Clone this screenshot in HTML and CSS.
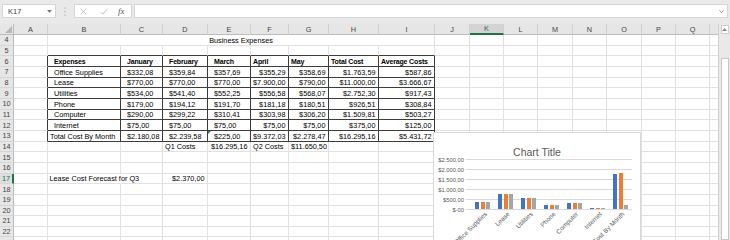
FILE: index.html
```html
<!DOCTYPE html>
<html>
<head>
<meta charset="utf-8">
<title>Business Expenses</title>
<link rel="stylesheet" href="styles.css">
</head>
<body>
<div class="app">
  <div class="formula-bar">
    <div class="namebox"><span class="nb-text">K17</span><svg class="nb-caret" width="5" height="3" viewBox="0 0 5 3"><path d="M0 0h5L2.5 3z" fill="#7a7a7a"/></svg></div>
    <div class="grip"><svg width="2" height="9" viewBox="0 0 2 9"><circle cx="1" cy="1" r=".7" fill="#b0b0b0"/><circle cx="1" cy="4.5" r=".7" fill="#b0b0b0"/><circle cx="1" cy="8" r=".7" fill="#b0b0b0"/></svg></div>
    <div class="fxbox">
      <svg class="ic-x" width="7" height="7" viewBox="0 0 7 7"><path d="M0.6 0.6L6.4 6.4M6.4 0.6L0.6 6.4" stroke="#bcbcbc" stroke-width="0.9" fill="none"/></svg>
      <svg class="ic-check" width="8" height="7" viewBox="0 0 8 7"><path d="M0.6 3.9L2.9 6.2L7.4 0.7" stroke="#bcbcbc" stroke-width="0.9" fill="none"/></svg>
      <span class="fx">fx</span>
    </div>
    <div class="finput"><svg width="5" height="3" viewBox="0 0 5 3"><path d="M0.4 0.4L2.5 2.6L4.6 0.4" stroke="#777" stroke-width="0.8" fill="none"/></svg></div>
  </div>
  <div class="workspace">
    <div class="sheet">
      <table class="grid">
        <colgroup>
          <col class="w-rh"><col class="w-a"><col class="w-b"><col class="w-c"><col class="w-d"><col class="w-e"><col class="w-f"><col class="w-g"><col class="w-h"><col class="w-i"><col class="w-j"><col class="w-k"><col class="w-l"><col class="w-m"><col class="w-n"><col class="w-o"><col class="w-p"><col class="w-q"><col class="w-r">
        </colgroup>
        <tr class="hdr">
          <th class="corner"><svg width="7" height="7" viewBox="0 0 7 7"><path d="M7 0V7H0z" fill="#b8b8b8"/></svg></th>
          <th class="ch">A</th><th class="ch">B</th><th class="ch">C</th><th class="ch">D</th><th class="ch">E</th><th class="ch">F</th><th class="ch">G</th><th class="ch">H</th><th class="ch">I</th><th class="ch">J</th><th class="ch sel">K</th><th class="ch">L</th><th class="ch">M</th><th class="ch">N</th><th class="ch">O</th><th class="ch">P</th><th class="ch">Q</th><th class="ch"></th>
        </tr>
        <tr>
          <th class="rh">4</th><td></td><td colspan="8" class="title">Business Expenses</td><td></td><td></td><td></td><td></td><td></td><td></td><td></td><td></td><td></td>
        </tr>
        <tr>
          <th class="rh">5</th><td></td><td class="db"></td><td class="db"></td><td class="db"></td><td class="db"></td><td class="db"></td><td class="db"></td><td class="db"></td><td class="db"></td><td></td><td></td><td></td><td></td><td></td><td></td><td></td><td></td><td></td>
        </tr>
        <tr>
          <th class="rh">6</th><td class="dr"></td><td class="t b in">Expenses</td><td class="t b in">January</td><td class="t b in">February</td><td class="t b in">March</td><td class="t b">April</td><td class="t b">May</td><td class="t b">Total Cost</td><td class="t b">Average Costs</td><td></td><td></td><td></td><td></td><td></td><td></td><td></td><td></td><td></td>
        </tr>
        <tr>
          <th class="rh">7</th><td class="dr"></td><td class="t in">Office Supplies</td><td class="t in">$332,08</td><td class="t in">$359,84</td><td class="t in">$357,69</td><td class="t num">$355,29</td><td class="t num">$358,69</td><td class="t num">$1.763,59</td><td class="t num">$587,86</td><td></td><td></td><td></td><td></td><td></td><td></td><td></td><td></td><td></td>
        </tr>
        <tr>
          <th class="rh">8</th><td class="dr"></td><td class="t in">Lease</td><td class="t in">$770,00</td><td class="t in">$770,00</td><td class="t in">$770,00</td><td class="t num">$7.900,00</td><td class="t num">$790,00</td><td class="t num">$11.000,00</td><td class="t num">$3.666,67</td><td></td><td></td><td></td><td></td><td></td><td></td><td></td><td></td><td></td>
        </tr>
        <tr>
          <th class="rh">9</th><td class="dr"></td><td class="t in">Utilities</td><td class="t in">$534,00</td><td class="t in">$541,40</td><td class="t in">$552,25</td><td class="t num">$556,58</td><td class="t num">$568,07</td><td class="t num">$2.752,30</td><td class="t num">$917,43</td><td></td><td></td><td></td><td></td><td></td><td></td><td></td><td></td><td></td>
        </tr>
        <tr>
          <th class="rh">10</th><td class="dr"></td><td class="t in">Phone</td><td class="t in">$179,00</td><td class="t in">$194,12</td><td class="t in">$191,70</td><td class="t num">$181,18</td><td class="t num">$180,51</td><td class="t num">$926,51</td><td class="t num">$308,84</td><td></td><td></td><td></td><td></td><td></td><td></td><td></td><td></td><td></td>
        </tr>
        <tr>
          <th class="rh">11</th><td class="dr"></td><td class="t in">Computer</td><td class="t in">$290,00</td><td class="t in">$299,22</td><td class="t in">$310,41</td><td class="t num">$303,98</td><td class="t num">$306,20</td><td class="t num">$1.509,81</td><td class="t num">$503,27</td><td></td><td></td><td></td><td></td><td></td><td></td><td></td><td></td><td></td>
        </tr>
        <tr>
          <th class="rh">12</th><td class="dr"></td><td class="t in">Internet</td><td class="t in">$75,00</td><td class="t in">$75,00</td><td class="t in">$75,00</td><td class="t num">$75,00</td><td class="t num">$75,00</td><td class="t num">$375,00</td><td class="t num">$125,00</td><td></td><td></td><td></td><td></td><td></td><td></td><td></td><td></td><td></td>
        </tr>
        <tr>
          <th class="rh">13</th><td class="dr"></td><td class="t">Total Cost By Month</td><td class="t in">$2.180,08</td><td class="t in">$2.239,58</td><td class="t in err">$225,00</td><td class="t num">$9.372,03</td><td class="t num">$2.278,47</td><td class="t num">$16.295,16</td><td class="t num">$5.431,72</td><td></td><td></td><td></td><td></td><td></td><td></td><td></td><td></td><td></td>
        </tr>
        <tr>
          <th class="rh">14</th><td></td><td></td><td></td><td>Q1 Costs</td><td class="num">$16.295,16</td><td>Q2 Costs</td><td class="num">$11.650,50</td><td></td><td></td><td></td><td></td><td></td><td></td><td></td><td></td><td></td><td></td><td></td>
        </tr>
        <tr>
          <th class="rh">15</th><td></td><td></td><td></td><td></td><td></td><td></td><td></td><td></td><td></td><td></td><td></td><td></td><td></td><td></td><td></td><td></td><td></td><td></td>
        </tr>
        <tr>
          <th class="rh">16</th><td></td><td></td><td></td><td></td><td></td><td></td><td></td><td></td><td></td><td></td><td></td><td></td><td></td><td></td><td></td><td></td><td></td><td></td>
        </tr>
        <tr>
          <th class="rh sel">17</th><td></td><td class="ovf">Lease Cost Forecast for Q3</td><td></td><td class="num">$2.370,00</td><td></td><td></td><td></td><td></td><td></td><td></td><td></td><td></td><td></td><td></td><td></td><td></td><td></td><td></td>
        </tr>
        <tr>
          <th class="rh">18</th><td></td><td></td><td></td><td></td><td></td><td></td><td></td><td></td><td></td><td></td><td></td><td></td><td></td><td></td><td></td><td></td><td></td><td></td>
        </tr>
        <tr>
          <th class="rh">19</th><td></td><td></td><td></td><td></td><td></td><td></td><td></td><td></td><td></td><td></td><td></td><td></td><td></td><td></td><td></td><td></td><td></td><td></td>
        </tr>
        <tr>
          <th class="rh">20</th><td></td><td></td><td></td><td></td><td></td><td></td><td></td><td></td><td></td><td></td><td></td><td></td><td></td><td></td><td></td><td></td><td></td><td></td>
        </tr>
        <tr>
          <th class="rh">21</th><td></td><td></td><td></td><td></td><td></td><td></td><td></td><td></td><td></td><td></td><td></td><td></td><td></td><td></td><td></td><td></td><td></td><td></td>
        </tr>
        <tr>
          <th class="rh">22</th><td></td><td></td><td></td><td></td><td></td><td></td><td></td><td></td><td></td><td></td><td></td><td></td><td></td><td></td><td></td><td></td><td></td><td></td>
        </tr>
        <tr>
          <th class="rh"></th><td></td><td></td><td></td><td></td><td></td><td></td><td></td><td></td><td></td><td></td><td></td><td></td><td></td><td></td><td></td><td></td><td></td><td></td>
        </tr>
      </table>

      <div class="chart">
        <div class="chart-title">Chart Title</div>
        <div class="chart-body">
          <div class="yaxis">
            <span>$2.500,00</span><span>$2.000,00</span><span>$1.500,00</span><span>$1.000,00</span><span>$500,00</span><span>$-00</span>
          </div>
          <div class="plot">
            <div class="bars">
              <div class="cat"><div class="bar s1" style="height:6.6px"></div><div class="bar s2" style="height:7.2px"></div><div class="bar s3" style="height:7.2px"></div><span class="cat-label">Office Supplies</span></div>
              <div class="cat"><div class="bar s1" style="height:15.4px"></div><div class="bar s2" style="height:15.4px"></div><div class="bar s3" style="height:15.4px"></div><span class="cat-label">Lease</span></div>
              <div class="cat"><div class="bar s1" style="height:10.7px"></div><div class="bar s2" style="height:10.8px"></div><div class="bar s3" style="height:11px"></div><span class="cat-label">Utilities</span></div>
              <div class="cat"><div class="bar s1" style="height:3.6px"></div><div class="bar s2" style="height:3.9px"></div><div class="bar s3" style="height:3.8px"></div><span class="cat-label">Phone</span></div>
              <div class="cat"><div class="bar s1" style="height:5.8px"></div><div class="bar s2" style="height:6px"></div><div class="bar s3" style="height:6.2px"></div><span class="cat-label">Computer</span></div>
              <div class="cat"><div class="bar s1" style="height:1.5px"></div><div class="bar s2" style="height:1.5px"></div><div class="bar s3" style="height:1.5px"></div><span class="cat-label">Internet</span></div>
              <div class="cat"><div class="bar s1" style="height:34.7px"></div><div class="bar s2" style="height:36.3px"></div><div class="bar s3" style="height:4.5px"></div><span class="cat-label">Total Cost By Month</span></div>
            </div>
          </div>
        </div>
      </div>
    </div>
    <div class="vscroll">
      <div class="vs-up"><svg width="5" height="3" viewBox="0 0 5 3"><path d="M0 3h5L2.5 0z" fill="#8a8a8a"/></svg></div>
      <div class="vs-track"></div>
      <div class="vs-thumb"></div>
    </div>
  </div>
</div>
</body>
</html>
```

FILE: styles.css
```css
* { box-sizing: border-box; }
html, body { margin: 0; padding: 0; }
body {
  width: 730px;
  height: 240px;
  overflow: hidden;
  background: #fff;
  font-family: "Liberation Sans", Arial, sans-serif;
  color: #000;
}
.app { display: flex; flex-direction: column; height: 240px; }

/* formula bar */
.formula-bar {
  height: 24px;
  flex: none;
  display: flex;
  align-items: flex-start;
  padding: 4px 2px 0 2px;
  background: #e9e9e9;
}
.namebox {
  width: 54px;
  height: 14px;
  background: #fff;
  border: 1px solid #d6d6d6;
  display: flex;
  align-items: center;
  justify-content: space-between;
  padding: 0 3px 0 5px;
  font-size: 7.5px;
  color: #444;
}
.grip { width: 18px; height: 14px; display: flex; align-items: center; justify-content: center; }
.fxbox {
  width: 58px;
  height: 14px;
  background: #fff;
  border: 1px solid #d6d6d6;
  display: flex;
  align-items: center;
  padding-left: 5px;
}
.ic-check { margin-left: 13px; }
.fx {
  margin-left: 10px;
  font-family: "Liberation Serif", "Times New Roman", serif;
  font-style: italic;
  font-size: 9px;
  color: #555;
}
.finput {
  flex: 1;
  margin-left: 2px;
  height: 14px;
  background: #fff;
  border: 1px solid #d6d6d6;
  display: flex;
  align-items: center;
  justify-content: flex-end;
  padding-right: 3px;
}

/* workspace */
.workspace { flex: 1; display: flex; overflow: hidden; }
.sheet { position: relative; width: 718px; flex: none; overflow: hidden; }

.grid {
  border-collapse: separate;
  border-spacing: 0;
  table-layout: fixed;
  width: 744px;
}
.w-rh { width: 14px; }
.w-a { width: 34px; }
.w-b { width: 73px; }
.w-c { width: 42px; }
.w-d { width: 45px; }
.w-e { width: 43px; }
.w-f { width: 38px; }
.w-g { width: 40px; }
.w-h { width: 50px; }
.w-i { width: 56px; }
.w-j { width: 35px; }
.w-k { width: 34px; }
.w-l { width: 34px; }
.w-m { width: 35px; }
.w-n { width: 34px; }
.w-o { width: 35px; }
.w-p { width: 34px; }
.w-q { width: 34px; }
.w-r { width: 34px; }

.grid tr { height: 10.667px; }
.grid td, .grid th {
  padding: 0;
  font-size: 7.3px;
  line-height: 9px;
  white-space: nowrap;
  overflow: visible;
}
.grid td {
  vertical-align: bottom;
  border-right: 1px solid #e1e1e1;
  border-bottom: 1px solid #e1e1e1;
  padding: 0 2px;
}
.grid th {
  font-weight: normal;
  color: #444;
  background: #e6e6e6;
  vertical-align: middle;
  text-align: center;
}
.grid th.ch {
  border-right: 1px solid #d0d0d0;
  border-bottom: 1px solid #bcbcbc;
}
.grid th.corner {
  border-right: 1px solid #bcbcbc;
  border-bottom: 1px solid #bcbcbc;
  text-align: right;
  vertical-align: bottom;
  line-height: 0;
  padding: 0 1px 1px 0;
}
.grid th.rh {
  border-right: 1px solid #bcbcbc;
  border-bottom: 1px solid #d6d6d6;
}
.grid th.ch.sel {
  background: #d4d4d4;
  color: #217346;
  border-bottom: 2px solid #217346;
}
.grid th.rh.sel {
  background: #dedede;
  color: #217346;
  border-right: 2px solid #217346;
}

.grid td.title { text-align: center; }
.grid td.t { border-right-color: #3c3c3c; border-bottom-color: #3c3c3c; }
.grid td.dr { border-right-color: #3c3c3c; }
.grid td.db { border-bottom-color: #3c3c3c; }
.grid td.b { font-weight: bold; letter-spacing: -0.15px; font-size: 7px; }
.grid td.in { padding-left: 6px; }
.grid td.num { text-align: right; padding-right: 2.5px; }
.grid td.ovf { border-right-color: transparent; padding-left: 1.5px; }
.grid td.err { position: relative; }
.grid td.err::before {
  content: "";
  position: absolute;
  left: 0;
  top: 0;
  border-top: 3px solid #1f8a3a;
  border-right: 3px solid transparent;
}

/* chart */
.chart {
  position: absolute;
  left: 433px;
  top: 108px;
  width: 208px;
  height: 140px;
  background: #fff;
  border: 1px solid #d9d9d9;
  overflow: hidden;
  padding-top: 13px;
}
.chart-title {
  text-align: center;
  font-size: 10.5px;
  line-height: 12px;
  color: #595959;
}
.chart-body { display: flex; margin-top: 1px; }
.yaxis {
  width: 30px;
  display: flex;
  flex-direction: column;
  margin-top: -4.5px;
}
.yaxis span {
  height: 10px;
  line-height: 10px;
  font-size: 5.8px;
  color: #595959;
  text-align: right;
}
.plot {
  margin-left: 2px;
  width: 166px;
  height: 51px;
  background: repeating-linear-gradient(to bottom, #d9d9d9 0, #d9d9d9 1px, transparent 1px, transparent 10px);
}
.bars { display: flex; height: 50px; padding-left: 5px; }
.cat {
  flex: 1;
  position: relative;
  display: flex;
  justify-content: center;
  align-items: flex-end;
  gap: 1.5px;
}
.bar { width: 4px; }
.s1 { background: #4472c4; }
.s2 { background: #ed7d31; }
.s3 { background: #a5a5a5; }
.cat-label {
  position: absolute;
  top: calc(100% + 2px);
  right: 50%;
  margin-right: -1px;
  transform-origin: 100% 0;
  transform: rotate(-45deg);
  font-size: 6.4px;
  line-height: 6.5px;
  color: #595959;
  white-space: nowrap;
}

/* vertical scrollbar */
.vscroll {
  width: 12px;
  flex: none;
  background: #e9e9e9;
  border-left: 1px solid #d0d0d0;
  display: flex;
  flex-direction: column;
  align-items: center;
  padding-top: 1px;
}
.vs-up {
  width: 8px;
  height: 9px;
  flex: none;
  background: #fff;
  border: 1px solid #cfcfcf;
  display: flex;
  align-items: center;
  justify-content: center;
}
.vs-track { height: 24px; flex: none; }
.vs-thumb { width: 8px; flex: 1; background: #fff; border: 1px solid #c6c6c6; }
```
